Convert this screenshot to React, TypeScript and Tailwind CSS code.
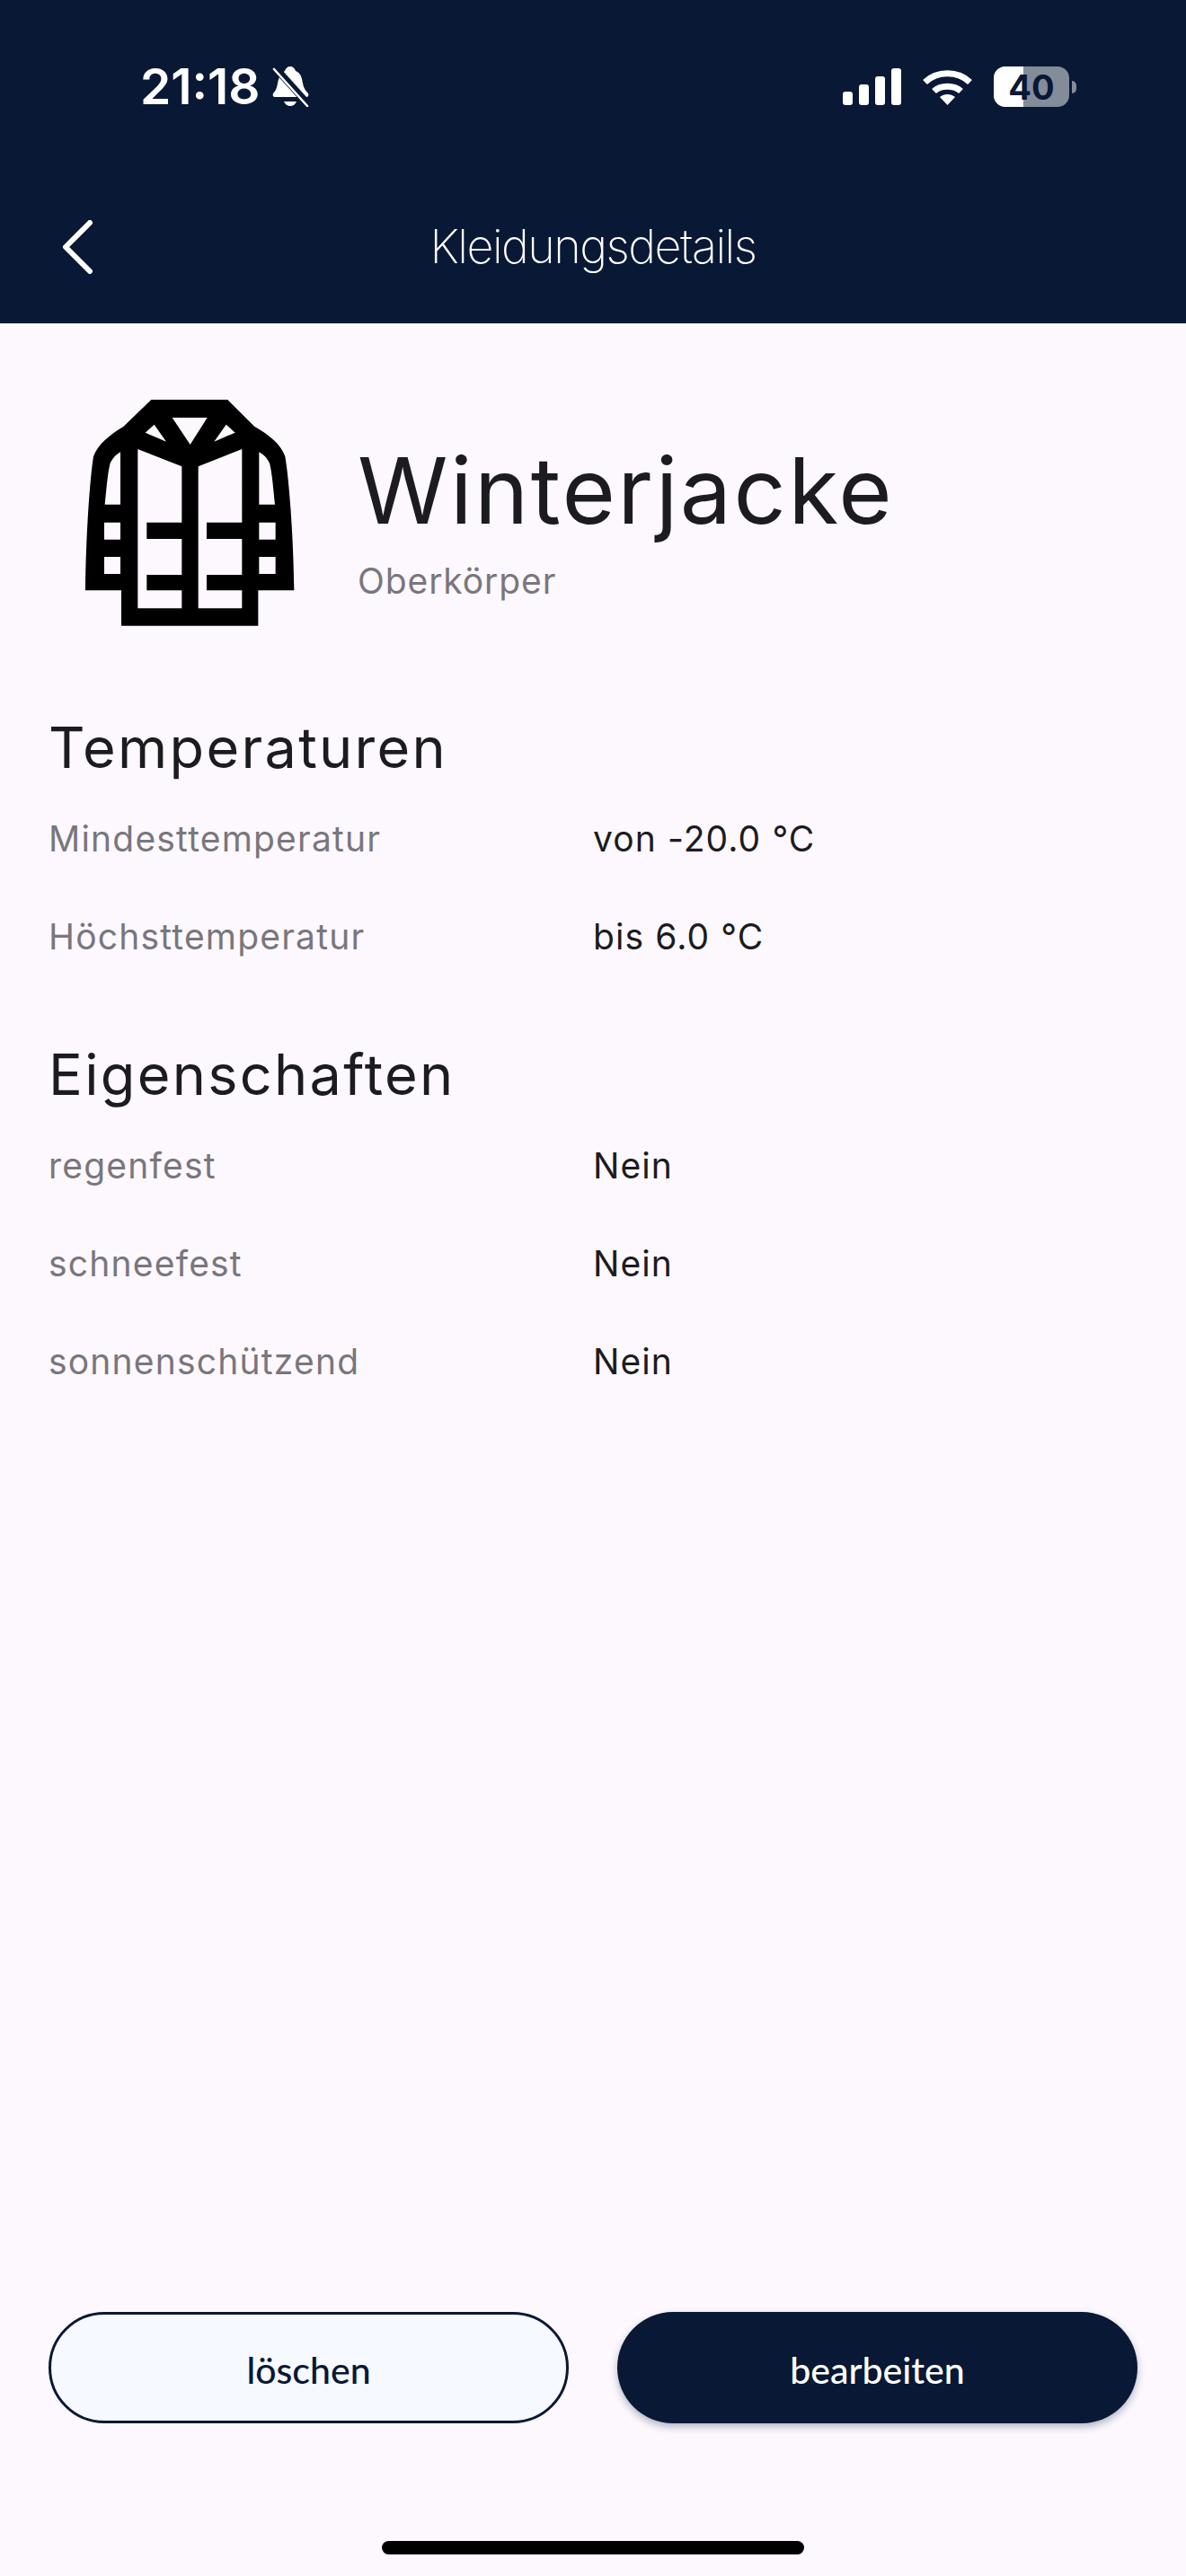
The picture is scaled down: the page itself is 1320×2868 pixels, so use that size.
const temperatures = [
  { label: 'Mindesttemperatur', value: 'von -20.0 °C' },
  { label: 'Höchsttemperatur', value: 'bis 6.0 °C' },
]

const properties = [
  { label: 'regenfest', value: 'Nein' },
  { label: 'schneefest', value: 'Nein' },
  { label: 'sonnenschützend', value: 'Nein' },
]

function MutedBell() {
  return (
    <svg viewBox="0 0 41 45" className="h-[45px] w-[41px]" aria-hidden="true">
      <path
        d="M20 0c3 0 5 2 6 5 6 2 7 8 8 14 1 5 3 8 6 11 1 2 0 4-2 4H3c-2 0-3-2-2-4 3-3 4-6 5-11C7 13 9 8 14 5c1-3 3-5 6-5z"
        fill="white"
      />
      <path d="M13 39h14c-1 3-4 5-7 5s-6-2-7-5z" fill="white" />
      <path d="M2 0 40 42" stroke="#091835" strokeWidth="8" />
      <path d="M2 3 39 44" stroke="white" strokeWidth="2.6" strokeLinecap="round" />
    </svg>
  )
}

function Signal() {
  return (
    <div className="flex h-[41px] items-end gap-[7px]">
      <div className="h-[15px] w-[11px] rounded-[3px] bg-white" />
      <div className="h-[23px] w-[11px] rounded-[3px] bg-white" />
      <div className="h-[32px] w-[11px] rounded-[3px] bg-white" />
      <div className="h-[41px] w-[11px] rounded-[3px] bg-white" />
    </div>
  )
}

function Wifi() {
  return (
    <svg viewBox="0 0 57 41" className="h-[41px] w-[57px]" aria-hidden="true">
      <path d="M3.500 15.500C17 2.500 40 2.500 53.500 15.500" fill="none" stroke="white" strokeWidth="7" />
      <path d="M13.500 25.500C21 18.500 36 18.500 43.500 25.500" fill="none" stroke="white" strokeWidth="7" />
      <path d="M20 32c5-4 12-4 17 0l-8.500 9z" fill="white" />
    </svg>
  )
}

function Battery() {
  return (
    <div className="flex items-center gap-[3px]">
      <div className="relative flex h-[45px] w-[84px] overflow-hidden rounded-[13px] bg-white/50">
        <div className="h-full w-[33px] bg-white" />
        <span className="absolute inset-0 flex items-center justify-center text-[38px] leading-none font-bold text-[#091835]">
          40
        </span>
      </div>
      <div className="h-[14px] w-[5px] rounded-r-full bg-white/50" />
    </div>
  )
}

// the jacket icon, traced on a 900 unit grid
function Jacket() {
  return (
    <svg viewBox="0 0 900 900" className="h-[300px] w-[300px]" aria-hidden="true">
      <path
        fillRule="evenodd"
        d="M325 75H580L670 165C715 190 760 225 772 265C785 340 800 530 802 712H682V830H225V712H105C107 530 120 340 132 265C145 225 190 190 232 165Z
        M395 135H512L455 225Z
        M335 158L375 215L305 185Z
        M575 158L605 185L535 215Z
        M222 250V425H170C175 380 178 330 187 290C192 275 205 260 222 250Z
        M685 250V425H738C733 380 730 330 721 290C716 275 703 260 685 250Z
        M168 485H222V542H168Z
        M168 600H222V657H168Z
        M685 485H740V542H685Z
        M685 600H740V657H685Z
        M280 240L427 298V485H310V540H427V660H310V712H427V772H280Z
        M628 240L482 298V772H628V712H510V660H628V540H510V485H628Z"
        fill="black"
      />
    </svg>
  )
}

function DetailRow({ label, value }: { label: string; value: string }) {
  return (
    <div className="grid h-[109px] grid-cols-[606px_1fr] items-center text-[39px] font-[380]">
      <span className="tracking-[1.2px] text-[#79767d]">{label}</span>
      <span className="tracking-[1.1px] text-[#1c1b1f]">{value}</span>
    </div>
  )
}

export default function App() {
  return (
    <div className="flex h-[2868px] w-[1320px] flex-col overflow-hidden bg-[#fcf8fe] font-['Inter',sans-serif] text-[#1c1b1f]">
      {/* Status bar and title */}
      <header className="h-[360px] shrink-0 bg-[#091835] text-white">
        <div className="flex items-start justify-between pt-[74px] pr-[122px] pl-[156px]">
          <div className="flex items-center gap-[13px]">
            <span className="text-[55px] leading-[45px] font-semibold">21:18</span>
            <MutedBell />
          </div>
          <div className="flex items-center gap-[23px]">
            <Signal />
            <Wifi />
            <Battery />
          </div>
        </div>
        <div className="mt-[126px] grid grid-cols-[1fr_auto_1fr] items-center pl-[68px]">
          <svg viewBox="0 0 36 60" className="h-[60px] w-[36px]" fill="none" aria-hidden="true">
            <path d="M32 3 5 30l27 27" stroke="white" strokeWidth="6" strokeLinecap="round" strokeLinejoin="round" />
          </svg>
          <h1 className="-translate-x-[34px] text-[52px] leading-[60px] font-extralight tracking-[-1.5px]">
            Kleidungsdetails
          </h1>
          <div />
        </div>
      </header>

      <main className="flex-1 px-[54px]">
        {/* Item title */}
        <div className="mt-[60px] flex items-start">
          <div className="ml-[6px]">
            <Jacket />
          </div>
          <div className="mt-[61px] ml-[38px]">
            <p className="text-[102px] leading-[130px] font-[370] tracking-[2.4px]">Winterjacke</p>
            <p className="mt-[11px] text-[39px] leading-[50px] font-[380] tracking-[0.9px] text-[#79767d]">Oberkörper</p>
          </div>
        </div>

        <section className="mt-[65px]">
          <h2 className="text-[63px] leading-[95px] font-[370] tracking-[2.3px]">Temperaturen</h2>
          {temperatures.map((row) => (
            <DetailRow key={row.label} label={row.label} value={row.value} />
          ))}
        </section>

        <section className="mt-[51px]">
          <h2 className="text-[63px] leading-[95px] font-[370] tracking-[2.3px]">Eigenschaften</h2>
          {properties.map((row) => (
            <DetailRow key={row.label} label={row.label} value={row.value} />
          ))}
        </section>
      </main>

      {/* Actions */}
      <div className="grid shrink-0 grid-cols-2 gap-[54px] px-[54px]">
        <button
          type="button"
          className="h-[124px] rounded-[62px] border-[3px] border-[#091835] bg-[#f6f9ff] pt-[6px] font-['Lato',sans-serif] text-[41px] font-medium text-[#091835]"
        >
          löschen
        </button>
        <button
          type="button"
          className="h-[124px] rounded-[62px] bg-[#091835] pt-[6px] font-['Lato',sans-serif] text-[41px] font-medium text-white shadow-[0_4px_8px_rgba(10,26,56,0.3)]"
        >
          bearbeiten
        </button>
      </div>

      <div className="mt-[131px] mb-[24px] h-[15px] w-[470px] shrink-0 self-center rounded-full bg-black" />
    </div>
  )
}
